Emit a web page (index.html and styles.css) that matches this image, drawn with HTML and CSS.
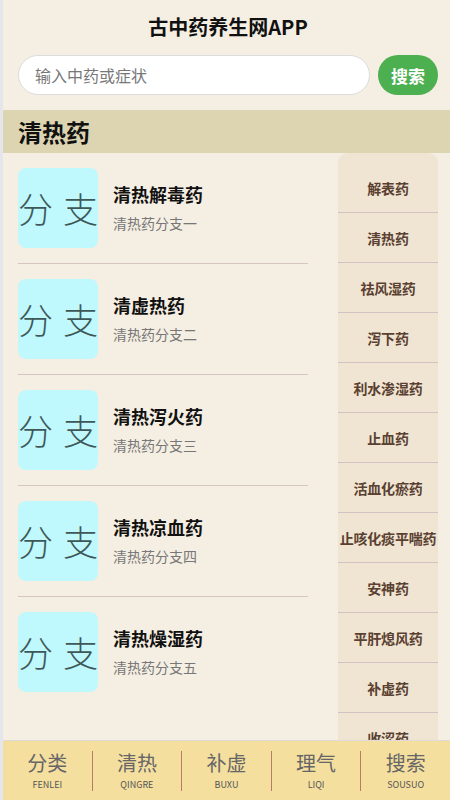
FILE: index.html
```html
<!DOCTYPE html>
<html lang="zh-CN">
<head>
<meta charset="utf-8">
<title>古中药养生网APP</title>
<link rel="stylesheet" href="styles.css">
</head>
<body>
<div class="app">
  <header class="header">
    <h1 class="title">古中药养生网APP</h1>
    <div class="search-row">
      <input class="search-input" type="text" placeholder="输入中药或症状">
      <button class="search-btn">搜索</button>
    </div>
  </header>
  <div class="cat-bar">清热药</div>
  <main class="main">
    <div class="list">
      <div class="item">
        <div class="thumb"><span>分</span><span>支</span></div>
        <div class="info"><div class="name">清热解毒药</div><div class="desc">清热药分支一</div></div>
      </div>
      <div class="item">
        <div class="thumb"><span>分</span><span>支</span></div>
        <div class="info"><div class="name">清虚热药</div><div class="desc">清热药分支二</div></div>
      </div>
      <div class="item">
        <div class="thumb"><span>分</span><span>支</span></div>
        <div class="info"><div class="name">清热泻火药</div><div class="desc">清热药分支三</div></div>
      </div>
      <div class="item">
        <div class="thumb"><span>分</span><span>支</span></div>
        <div class="info"><div class="name">清热凉血药</div><div class="desc">清热药分支四</div></div>
      </div>
      <div class="item last">
        <div class="thumb"><span>分</span><span>支</span></div>
        <div class="info"><div class="name">清热燥湿药</div><div class="desc">清热药分支五</div></div>
      </div>
    </div>
    <nav class="side">
      <div class="side-item">解表药</div>
      <div class="side-item">清热药</div>
      <div class="side-item">祛风湿药</div>
      <div class="side-item">泻下药</div>
      <div class="side-item">利水渗湿药</div>
      <div class="side-item">止血药</div>
      <div class="side-item">活血化瘀药</div>
      <div class="side-item">止咳化痰平喘药</div>
      <div class="side-item">安神药</div>
      <div class="side-item">平肝熄风药</div>
      <div class="side-item">补虚药</div>
      <div class="side-item">收涩药</div>
    </nav>
  </main>
  <footer class="tabbar">
    <div class="tab"><span class="tab-cn">分类</span><span class="tab-en">FENLEI</span></div>
    <div class="tab sep"><span class="tab-cn">清热</span><span class="tab-en">QINGRE</span></div>
    <div class="tab sep"><span class="tab-cn">补虚</span><span class="tab-en">BUXU</span></div>
    <div class="tab sep"><span class="tab-cn">理气</span><span class="tab-en">LIQI</span></div>
    <div class="tab sep"><span class="tab-cn">搜索</span><span class="tab-en">SOUSUO</span></div>
  </footer>
</div>
</body>
</html>
```
FILE: styles.css
```css
* { box-sizing: border-box; }
html, body { margin: 0; padding: 0; height: 100%; }
body {
  font-family: "Noto Sans CJK SC", "Noto Sans", sans-serif;
  background: #f5eee2;
  border-left: 3px solid #e4e6ec;
}
.app {
  height: 100vh;
  display: flex;
  flex-direction: column;
  overflow: hidden;
}
.header {
  padding: 13px 12px 15px 15px;
}
.title {
  margin: 0 0 15px;
  font-size: 20px;
  line-height: 27px;
  font-weight: 700;
  text-align: center;
  color: #111;
}
.search-row {
  display: flex;
  gap: 8px;
  height: 40px;
}
.search-input {
  flex: 1;
  height: 40px;
  border: 1px solid #dcdcdc;
  border-radius: 20px;
  background: #fff;
  padding: 0 16px;
  font-family: inherit;
  font-size: 16px;
  color: #333;
  outline: none;
}
.search-input::placeholder { color: #777; }
.search-btn {
  width: 60px;
  height: 40px;
  border: none;
  border-radius: 20px;
  background: #4caf50;
  color: #fff;
  font-family: inherit;
  font-size: 17px;
  font-weight: 700;
  padding: 0;
}
.cat-bar {
  height: 43px;
  line-height: 43px;
  background: #ddd5b2;
  padding-left: 15px;
  font-size: 24px;
  font-weight: 700;
  color: #111;
}
.main {
  flex: 1;
  display: flex;
  overflow: hidden;
  padding-right: 12px;
}
.list {
  flex: 1;
  padding: 0 30px 0 15px;
}
.item {
  display: flex;
  align-items: center;
  padding: 15px 0;
  border-bottom: 1px solid #d6c5c2;
}
.item.last { border-bottom: none; }
.thumb {
  width: 80px;
  height: 80px;
  flex: none;
  border-radius: 8px;
  background: #bff8fd;
  color: #3e5858;
  font-size: 35px;
  font-weight: 300;
  line-height: 80px;
  display: flex;
  justify-content: space-between;
  align-items: center;
}
.info {
  margin-left: 15px;
  margin-top: -2px;
}
.name {
  font-size: 18px;
  font-weight: 700;
  line-height: 24px;
  color: #111;
}
.desc {
  margin-top: 7px;
  font-size: 14px;
  line-height: 20px;
  color: #777;
}
.side {
  width: 100px;
  flex: none;
  background: #f0e5d3;
  border-radius: 10px 10px 0 0;
  padding-top: 10px;
}
.side-item {
  height: 50px;
  border-bottom: 1px solid #d3c2c4;
  display: flex;
  align-items: center;
  justify-content: center;
  font-size: 14px;
  font-weight: 700;
  color: #5a4030;
  white-space: nowrap;
  letter-spacing: -0.2px;
}
.tabbar {
  height: 60px;
  flex: none;
  display: flex;
  background: #f5df9f;
  border-top: 1px solid #dddcd8;
  padding: 10px 0 9px;
}
.tab {
  flex: 1;
  display: flex;
  flex-direction: column;
  align-items: center;
  justify-content: flex-start;
}
.tab.sep { border-left: 1px solid #b87b6a; }
.tab-cn {
  font-size: 20px;
  line-height: 24px;
  color: #666;
}
.tab-en {
  font-size: 9px;
  line-height: 12px;
  color: #555;
  margin-top: 4px;
}
```
